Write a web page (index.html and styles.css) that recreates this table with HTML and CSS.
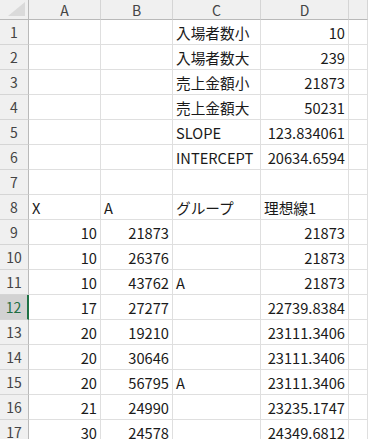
FILE: index.html
```html
<!DOCTYPE html>
<html lang="ja">
<head>
<meta charset="utf-8">
<link rel="stylesheet" href="styles.css">
</head>
<body>
<div class="sheet">
  <div class="row head">
    <div class="corner"><span class="tri"></span></div>
    <div class="ch">A</div><div class="ch">B</div><div class="ch">C</div><div class="ch">D</div><div class="ch"></div>
  </div>
  <div class="row"><div class="rh">1</div><div class="c"></div><div class="c"></div><div class="c">入場者数小</div><div class="c n">10</div><div class="c"></div></div>
  <div class="row"><div class="rh">2</div><div class="c"></div><div class="c"></div><div class="c">入場者数大</div><div class="c n">239</div><div class="c"></div></div>
  <div class="row"><div class="rh">3</div><div class="c"></div><div class="c"></div><div class="c">売上金額小</div><div class="c n">21873</div><div class="c"></div></div>
  <div class="row"><div class="rh">4</div><div class="c"></div><div class="c"></div><div class="c">売上金額大</div><div class="c n">50231</div><div class="c"></div></div>
  <div class="row"><div class="rh">5</div><div class="c"></div><div class="c"></div><div class="c">SLOPE</div><div class="c n">123.834061</div><div class="c"></div></div>
  <div class="row"><div class="rh">6</div><div class="c"></div><div class="c"></div><div class="c">INTERCEPT</div><div class="c n">20634.6594</div><div class="c"></div></div>
  <div class="row"><div class="rh">7</div><div class="c"></div><div class="c"></div><div class="c"></div><div class="c"></div><div class="c"></div></div>
  <div class="row"><div class="rh">8</div><div class="c">X</div><div class="c">A</div><div class="c">グループ</div><div class="c">理想線1</div><div class="c"></div></div>
  <div class="row"><div class="rh">9</div><div class="c n">10</div><div class="c n">21873</div><div class="c"></div><div class="c n">21873</div><div class="c"></div></div>
  <div class="row"><div class="rh">10</div><div class="c n">10</div><div class="c n">26376</div><div class="c"></div><div class="c n">21873</div><div class="c"></div></div>
  <div class="row"><div class="rh">11</div><div class="c n">10</div><div class="c n">43762</div><div class="c">A</div><div class="c n">21873</div><div class="c"></div></div>
  <div class="row"><div class="rh sel">12</div><div class="c n">17</div><div class="c n">27277</div><div class="c"></div><div class="c n">22739.8384</div><div class="c"></div></div>
  <div class="row"><div class="rh">13</div><div class="c n">20</div><div class="c n">19210</div><div class="c"></div><div class="c n">23111.3406</div><div class="c"></div></div>
  <div class="row"><div class="rh">14</div><div class="c n">20</div><div class="c n">30646</div><div class="c"></div><div class="c n">23111.3406</div><div class="c"></div></div>
  <div class="row"><div class="rh">15</div><div class="c n">20</div><div class="c n">56795</div><div class="c">A</div><div class="c n">23111.3406</div><div class="c"></div></div>
  <div class="row"><div class="rh">16</div><div class="c n">21</div><div class="c n">24990</div><div class="c"></div><div class="c n">23235.1747</div><div class="c"></div></div>
  <div class="row"><div class="rh">17</div><div class="c n">30</div><div class="c n">24578</div><div class="c"></div><div class="c n">24349.6812</div><div class="c"></div></div>
</div>
</body>
</html>
```
FILE: styles.css
```css
html, body {
  margin: 0;
  padding: 0;
  background: #ffffff;
  overflow: hidden;
}
body {
  width: 368px;
  height: 439px;
  font-family: "Noto Sans CJK JP", "Noto Sans", sans-serif;
  font-size: 14.67px;
  color: #1a1a1a;
}
.sheet {
  display: flex;
  flex-direction: column;
}
.row {
  display: grid;
  grid-template-columns: 29px 72px 72px 88px 88px 1fr;
  height: 25px;
}
.row > div {
  box-sizing: border-box;
  border-right: 1px solid #dfdfdf;
  border-bottom: 1px solid #dfdfdf;
  display: flex;
  align-items: center;
  white-space: nowrap;
  overflow: hidden;
}
.row.head {
  height: 20px;
}
.row.head > div {
  background: #f0f0f0;
  border-bottom: 1px solid #b9b9b9;
  border-right-color: #d5d5d5;
  justify-content: center;
  color: #444;
  font-size: 14px;
}
.row.head > .corner {
  border-right: 1px solid #b9b9b9;
  position: relative;
}
.tri {
  position: absolute;
  right: 3px;
  bottom: 3px;
  width: 0;
  height: 0;
  border-left: 17px solid transparent;
  border-bottom: 14px solid #dadada;
}
.rh {
  background: #f0f0f0;
  justify-content: center;
  color: #444;
  font-size: 14px;
  border-right: 1px solid #b9b9b9 !important;
  border-bottom-color: #d5d5d5 !important;
}
.rh.sel {
  background: #d2d2d2;
  color: #1e6e42;
  border-right: 2px solid #1e7145 !important;
}
.c {
  padding: 0 3px;
}
.c.n {
  justify-content: flex-end;
}
```
